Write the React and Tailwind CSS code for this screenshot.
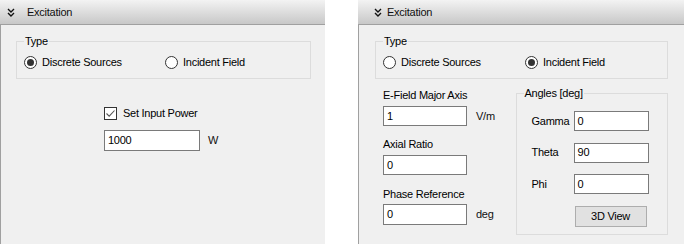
import { useState } from 'react'

const font = { fontFamily: '"Liberation Sans", Arial, sans-serif' }

function Chevrons({ className }) {
  return (
    <svg className={className} width="8" height="9" viewBox="0 0 8 9" fill="none">
      <path d="M1 1 L4 4 L7 1" stroke="#111" strokeWidth="1.4" />
      <path d="M1 5 L4 8 L7 5" stroke="#111" strokeWidth="1.4" />
    </svg>
  )
}

function Header({ chevronGap }) {
  return (
    <div className="flex h-[25px] items-center border-b border-[#a0a0a0] bg-gradient-to-b from-[#f3f3f3] to-[#c8c8c8]">
      <Chevrons className={chevronGap} />
      <span className="text-[11px] text-[#111]">Excitation</span>
    </div>
  )
}

function Radio({ checked, label, onClick }) {
  return (
    <button type="button" onClick={onClick} className="flex items-center gap-[5px] text-[11px] text-black">
      <span className="flex h-[13px] w-[13px] items-center justify-center rounded-full border border-[#333] bg-white">
        {checked && <span className="h-[7px] w-[7px] rounded-full bg-[#333]" />}
      </span>
      {label}
    </button>
  )
}

function GroupBox({ title, className, children }) {
  return (
    <div className={`relative border border-[#dcdcdc] ${className}`}>
      <span className="absolute -top-[8px] left-[7px] bg-[#f0f0f0] px-[1px] text-[11px] leading-[14px] text-black">
        {title}
      </span>
      {children}
    </div>
  )
}

function Field({ value, className }) {
  return (
    <div className={`flex items-center border border-[#7a7a7a] bg-white pl-[3px] text-[11px] text-black ${className}`}>
      {value}
    </div>
  )
}

function TypeBox({ discrete, setDiscrete, second }) {
  return (
    <GroupBox title="Type" className="h-[38px]">
      <div className="flex h-full items-center pt-[5px] pl-[7px]">
        <div className={second}>
          <Radio checked={discrete} label="Discrete Sources" onClick={() => setDiscrete(true)} />
        </div>
        <Radio checked={!discrete} label="Incident Field" onClick={() => setDiscrete(false)} />
      </div>
    </GroupBox>
  )
}

export default function App() {
  const [leftDiscrete, setLeftDiscrete] = useState(true)
  const [rightDiscrete, setRightDiscrete] = useState(false)

  return (
    <div className="flex h-[244px] w-[684px] bg-white tracking-[-0.25px]" style={font}>
      {/* left panel */}
      <div className="flex w-[325px] flex-col bg-[#f0f0f0]">
        <Header chevronGap="ml-[7px] mr-[12px]" />
        <div className="flex-1 border-l border-[#a0a0a0] pl-[15px] pr-[14px] pt-[16px]">
          <TypeBox discrete={leftDiscrete} setDiscrete={setLeftDiscrete} second="w-[141px]" />
          <div className="ml-[88px] mt-[27px] flex h-[14px] items-center gap-[6px] text-[11px] leading-[14px] text-black">
            <span className="flex h-[13px] w-[13px] items-center justify-center border border-[#333] bg-white">
              <svg width="11" height="11" viewBox="0 0 11 11" fill="none">
                <path d="M1.5 5.5 L4.2 8.2 L9.5 2.5" stroke="#555" strokeWidth="1.1" />
              </svg>
            </span>
            Set Input Power
          </div>
          <div className="ml-[88px] mt-[10px] flex items-center">
            <Field value="1000" className="h-[21px] w-[96px]" />
            <span className="ml-[8px] text-[11px] text-[#111]">W</span>
          </div>
        </div>
      </div>

      <div className="w-[33px]" />

      {/* right panel */}
      <div className="flex w-[326px] flex-col bg-[#f0f0f0]">
        <Header chevronGap="ml-[16px] mr-[5px]" />
        <div className="flex-1 border-l border-[#a0a0a0] pl-[16px] pr-[16px] pt-[16px]">
          <TypeBox discrete={rightDiscrete} setDiscrete={setRightDiscrete} second="w-[142px]" />
          <div className="mt-[14px] flex">
            <div className="ml-[8px] flex w-[133px] flex-col text-[11px] text-black">
              <span className="mt-[-5px] h-[14px] leading-[14px]">E-Field Major Axis</span>
              <div className="mt-[4px] flex items-center">
                <Field value="1" className="h-[20px] w-[84px]" />
                <span className="ml-[9px] text-[#111]">V/m</span>
              </div>
              <span className="mt-[11px] h-[14px] leading-[14px]">Axial Ratio</span>
              <div className="mt-[4px] flex items-center">
                <Field value="0" className="h-[20px] w-[84px]" />
              </div>
              <span className="mt-[12px] h-[14px] leading-[14px]">Phase Reference</span>
              <div className="mt-[3px] flex items-center">
                <Field value="0" className="h-[21px] w-[84px]" />
                <span className="ml-[9px] text-[#111]">deg</span>
              </div>
            </div>
            <GroupBox title="Angles [deg]" className="h-[142px] w-[153px]">
              <div className="grid grid-cols-[42px_75px] items-center gap-y-[11.5px] pl-[15px] pt-[17px] text-[11px] text-black">
                <span>Gamma</span>
                <Field value="0" className="h-[20px]" />
                <span>Theta</span>
                <Field value="90" className="h-[20px]" />
                <span>Phi</span>
                <Field value="0" className="h-[20px]" />
                <span />
                <button type="button" className="ml-[1px] h-[21px] w-[72px] border border-[#adadad] bg-[#e1e1e1] text-[11px] text-black">
                  3D View
                </button>
              </div>
            </GroupBox>
          </div>
        </div>
      </div>
    </div>
  )
}
